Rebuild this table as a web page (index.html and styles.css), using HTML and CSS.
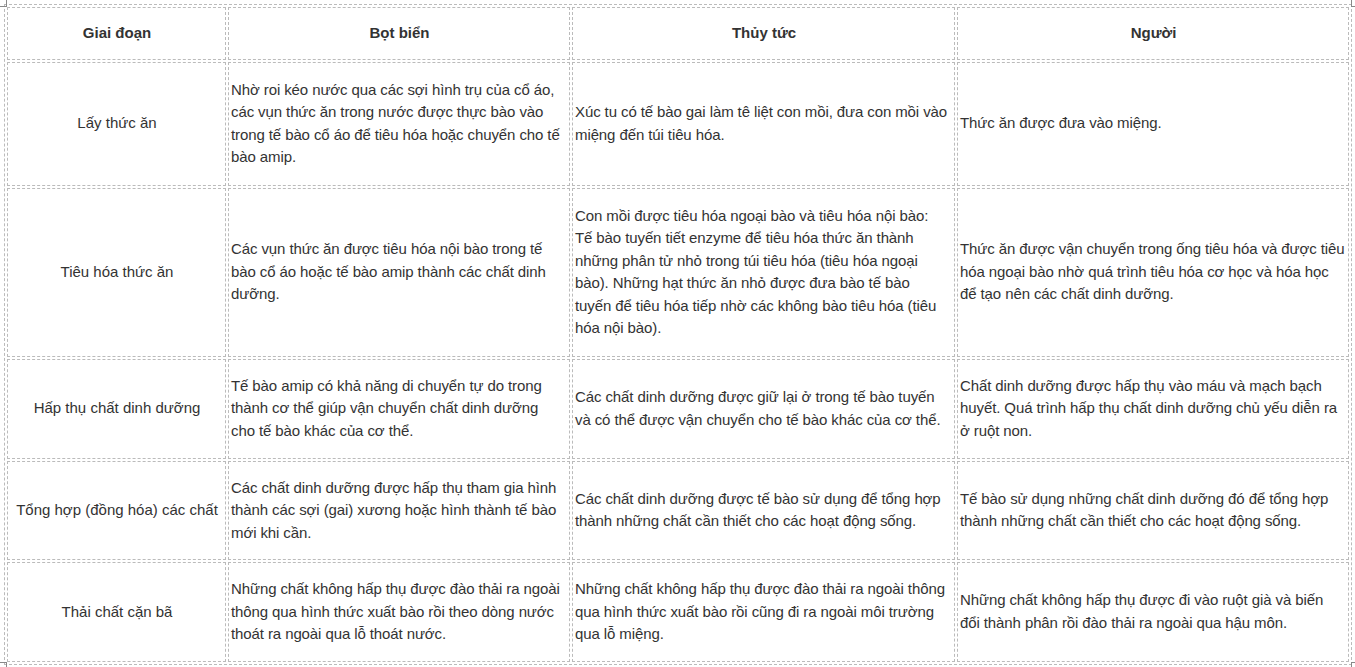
FILE: index.html
```html
<!DOCTYPE html>
<html lang="vi">
<head>
<meta charset="utf-8">
<title>Bảng so sánh tiêu hóa</title>
<link rel="stylesheet" href="styles.css">
</head>
<body>
<div class="wrap">
<span class="mark mark-tl"></span>
<span class="mark mark-tr"></span>
<span class="mark mark-bl"></span>
<span class="mark mark-br"></span>
<table class="cmp">
  <colgroup>
    <col class="c1"><col class="c2"><col class="c3"><col class="c4">
  </colgroup>
  <thead>
    <tr class="head">
      <th>Giai đoạn</th>
      <th>Bọt biển</th>
      <th>Thủy tức</th>
      <th>Người</th>
    </tr>
  </thead>
  <tbody>
    <tr class="r1">
      <td class="stage">Lấy thức ăn</td>
      <td>Nhờ roi kéo nước qua các sợi hình trụ của cổ áo,<br>các vụn thức ăn trong nước được thực bào vào<br>trong tế bào cổ áo để tiêu hóa hoặc chuyển cho tế<br>bào amip.</td>
      <td>Xúc tu có tế bào gai làm tê liệt con mồi, đưa con mồi vào<br>miệng đến túi tiêu hóa.</td>
      <td>Thức ăn được đưa vào miệng.</td>
    </tr>
    <tr class="r2">
      <td class="stage">Tiêu hóa thức ăn</td>
      <td>Các vụn thức ăn được tiêu hóa nội bào trong tế<br>bào cổ áo hoặc tế bào amip thành các chất dinh<br>dưỡng.</td>
      <td>Con mồi được tiêu hóa ngoại bào và tiêu hóa nội bào:<br>Tế bào tuyến tiết enzyme để tiêu hóa thức ăn thành<br>những phân tử nhỏ trong túi tiêu hóa (tiêu hóa ngoại<br>bào). Những hạt thức ăn nhỏ được đưa bào tế bào<br>tuyến để tiêu hóa tiếp nhờ các không bào tiêu hóa (tiêu<br>hóa nội bào).</td>
      <td>Thức ăn được vận chuyển trong ống tiêu hóa và được tiêu<br>hóa ngoại bào nhờ quá trình tiêu hóa cơ học và hóa học<br>để tạo nên các chất dinh dưỡng.</td>
    </tr>
    <tr class="r3">
      <td class="stage">Hấp thụ chất dinh dưỡng</td>
      <td>Tế bào amip có khả năng di chuyển tự do trong<br>thành cơ thể giúp vận chuyển chất dinh dưỡng<br>cho tế bào khác của cơ thể.</td>
      <td>Các chất dinh dưỡng được giữ lại ở trong tế bào tuyến<br>và có thể được vận chuyển cho tế bào khác của cơ thể.</td>
      <td>Chất dinh dưỡng được hấp thụ vào máu và mạch bạch<br>huyết. Quá trình hấp thụ chất dinh dưỡng chủ yếu diễn ra<br>ở ruột non.</td>
    </tr>
    <tr class="r4">
      <td class="stage">Tổng hợp (đồng hóa) các chất</td>
      <td>Các chất dinh dưỡng được hấp thụ tham gia hình<br>thành các sợi (gai) xương hoặc hình thành tế bào<br>mới khi cần.</td>
      <td>Các chất dinh dưỡng được tế bào sử dụng để tổng hợp<br>thành những chất cần thiết cho các hoạt động sống.</td>
      <td>Tế bào sử dụng những chất dinh dưỡng đó để tổng hợp<br>thành những chất cần thiết cho các hoạt động sống.</td>
    </tr>
    <tr class="r5">
      <td class="stage">Thải chất cặn bã</td>
      <td>Những chất không hấp thụ được đào thải ra ngoài<br>thông qua hình thức xuất bào rồi theo dòng nước<br>thoát ra ngoài qua lỗ thoát nước.</td>
      <td>Những chất không hấp thụ được đào thải ra ngoài thông<br>qua hình thức xuất bào rồi cũng đi ra ngoài môi trường<br>qua lỗ miệng.</td>
      <td>Những chất không hấp thụ được đi vào ruột già và biến<br>đổi thành phân rồi đào thải ra ngoài qua hậu môn.</td>
    </tr>
  </tbody>
</table>
</div>
</body>
</html>
```

FILE: styles.css
```css
html, body {
  margin: 0;
  padding: 0;
  background: #ffffff;
}

body {
  font-family: "Liberation Sans", Arial, sans-serif;
  color: #333333;
}

.wrap {
  position: relative;
  padding: 4px;
  width: 1347px;
}

.cmp {
  border: 1px dashed #bbbbbb;
  border-collapse: separate;
  border-spacing: 2px;
  table-layout: fixed;
  width: 1347px;
  font-size: 15px;
  line-height: 22.5px;
}

.c1 { width: 219px; }
.c2 { width: 342px; }
.c3 { width: 383px; }
.c4 { width: 392px; }

.cmp th,
.cmp td {
  border: 1px dashed #bbbbbb;
  padding: 15px 1px 15px 2px;
  vertical-align: middle;
  text-align: left;
  letter-spacing: -0.1px;
}

.cmp th {
  font-weight: bold;
  text-align: center;
  padding-top: 14px;
  padding-bottom: 14px;
  letter-spacing: 0;
}

.cmp td.stage {
  text-align: center;
  letter-spacing: 0;
}

.head th { height: 20px; }
.r1 td { height: 92px; }
.r2 td { height: 137px; }
.r3 td { height: 68px; }
.r4 td { height: 66px; }
.r5 td { height: 67px; }

.mark {
  position: absolute;
  width: 6px;
  height: 6px;
  border-color: #888888;
  border-style: solid;
  border-width: 0;
}
.mark-tl { left: 0; top: 0; border-right-width: 1px; border-bottom-width: 1px; }
.mark-tr { right: -3px; top: 0; border-left-width: 1px; border-bottom-width: 1px; }
.mark-bl { left: 0; bottom: 0; border-right-width: 1px; border-top-width: 1px; }
.mark-br { right: -3px; bottom: 0; border-left-width: 1px; border-top-width: 1px; }
```
